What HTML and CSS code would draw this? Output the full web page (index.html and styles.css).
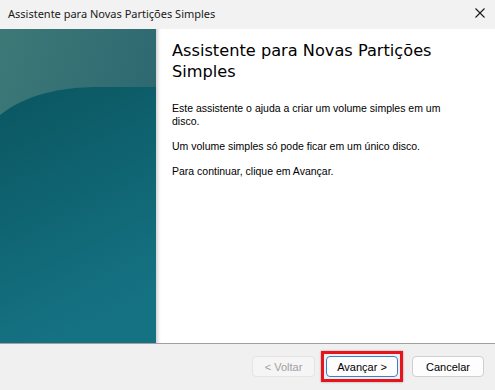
FILE: index.html
```html
<!DOCTYPE html>
<html lang="pt-BR">
<head>
<meta charset="utf-8">
<title>Assistente para Novas Partições Simples</title>
<link rel="stylesheet" href="styles.css">
</head>
<body>
<div class="window">
  <div class="titlebar">
    <span class="title">Assistente para Novas Partições Simples</span>
    <svg class="close" width="10" height="10" viewBox="0 0 10 10"><path d="M0.5 0.5 L9.5 9.5 M9.5 0.5 L0.5 9.5" stroke="#1a1a1a" stroke-width="1.1" fill="none"/></svg>
  </div>
  <div class="main">
    <div class="side">
      <svg class="side-art" width="156" height="314" viewBox="0 0 156 314" preserveAspectRatio="none">
        <defs>
          <linearGradient id="top" x1="0" y1="0" x2="1" y2="0.6">
            <stop offset="0" stop-color="#3d7977"/>
            <stop offset="1" stop-color="#2a6570"/>
          </linearGradient>
          <linearGradient id="low" x1="0" y1="0" x2="0.3" y2="1">
            <stop offset="0" stop-color="#0a5660"/>
            <stop offset="1" stop-color="#157283"/>
          </linearGradient>
        </defs>
        <rect width="156" height="314" fill="url(#top)"/>
        <path d="M0 86 C25 66 60 58 100 58 L156 58 L156 314 L0 314 Z" fill="url(#low)"/>
      </svg>
    </div>
    <div class="shade"></div>
    <div class="content">
      <h1 class="heading">Assistente para Novas Partições Simples</h1>
      <p class="text">Este assistente o ajuda a criar um volume simples em um disco.</p>
      <p class="text">Um volume simples só pode ficar em um único disco.</p>
      <p class="text">Para continuar, clique em Avançar.</p>
    </div>
  </div>
  <div class="footer">
    <button class="btn btn-disabled">&lt; Voltar</button>
    <span class="highlight"><button class="btn btn-default">Avançar &gt;</button></span>
    <button class="btn btn-cancel">Cancelar</button>
  </div>
</div>
</body>
</html>
```
FILE: styles.css
```css
html, body {
  margin: 0;
  padding: 0;
}
body {
  width: 495px;
  height: 390px;
  overflow: hidden;
  background: #f0f0f0;
  font-family: "Liberation Sans", Arial, sans-serif;
}
.window {
  display: flex;
  flex-direction: column;
  width: 495px;
  height: 390px;
}
.titlebar {
  height: 29px;
  flex: none;
  background: #f2f2f2;
  display: flex;
  align-items: center;
  justify-content: space-between;
  padding: 0 10px 0 8px;
}
.title {
  font-family: "Noto Sans", "Open Sans", sans-serif;
  font-size: 11px;
  color: #1a1a1a;
  margin-top: -2px;
}
.close {
  margin-top: -3px;
}
.main {
  height: 314px;
  flex: none;
  display: flex;
  background: #ffffff;
  border-bottom: 1px solid #a0a0a0;
}
.side {
  width: 156px;
  flex: none;
}
.side-art {
  display: block;
}
.shade {
  width: 5px;
  flex: none;
  background: linear-gradient(to right, #d4d4d4, #f4f4f4 60%, #ffffff);
}
.content {
  flex: 1;
  padding: 11px 20px 0 11px;
}
.heading {
  margin: 0 0 20px 0;
  font-family: "DejaVu Sans", Verdana, sans-serif;
  font-weight: normal;
  font-size: 16.2px;
  line-height: 21px;
  color: #000;
}
.text {
  margin: 0 0 12px 0;
  font-size: 10.5px;
  line-height: 13px;
  color: #000;
  width: 272px;
}
.footer {
  flex: 1;
  display: flex;
  align-items: center;
  justify-content: flex-end;
  padding: 0 11px 1px 0;
  background: #f0f0f0;
}
.btn {
  height: 21px;
  padding: 0;
  border: 1px solid #d0d0d0;
  border-radius: 4px;
  background: #fdfdfd;
  font-family: "Liberation Sans", Arial, sans-serif;
  font-size: 11px;
  color: #000;
  display: block;
}
.btn-disabled {
  width: 63px;
  color: #a0a0a0;
  background: #f5f5f5;
  border-color: #e4e4e4;
  margin-right: 6px;
}
.highlight {
  display: flex;
  padding: 2px;
  border: 3px solid #e8141c;
  box-shadow: 0 0 2px rgba(0, 0, 0, 0.35);
  margin-right: 9px;
}
.btn-default {
  width: 72px;
  height: 21px;
  border-color: #3c7fc6;
}
.btn-cancel {
  width: 72px;
}
```
